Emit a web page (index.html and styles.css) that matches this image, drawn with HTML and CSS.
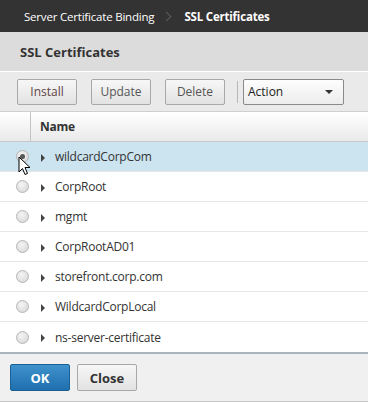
FILE: index.html
```html
<!DOCTYPE html>
<html lang="en">
<head>
  <meta charset="UTF-8">
  <title>SSL Certificates</title>
  <link rel="stylesheet" href="styles.css">
</head>
<body>
<div class="dialog">
  <!-- breadcrumb -->
  <div class="crumbs">
    <span class="crumb">Server Certificate Binding</span>
    <span class="crumb-sep"></span>
    <span class="crumb current">SSL Certificates</span>
  </div>

  <div class="heading">SSL Certificates</div>

  <div class="toolbar">
    <button class="btn install">Install</button>
    <button class="btn">Update</button>
    <button class="btn">Delete</button>
    <span class="tool-sep"></span>
    <div class="select">
      <span>Action</span>
      <span class="caret"></span>
    </div>
  </div>

  <div class="grid">
    <div class="grid-head">
      <div class="col-check"></div>
      <div class="col-name">Name</div>
    </div>
    <div class="row selected">
      <div class="col-check"><span class="radio checked"></span></div>
      <div class="col-name"><span class="expand"></span>wildcardCorpCom</div>
      <svg class="cursor" width="13" height="20" viewBox="0 0 13 20">
        <path d="M1 1 L1 16 L4.5 12.5 L7 18.5 L9.5 17.5 L7 11.5 L12 11.5 Z" fill="#fff" stroke="#000" stroke-width="1" stroke-linejoin="round"/>
      </svg>
    </div>
    <div class="row">
      <div class="col-check"><span class="radio"></span></div>
      <div class="col-name"><span class="expand"></span>CorpRoot</div>
    </div>
    <div class="row">
      <div class="col-check"><span class="radio"></span></div>
      <div class="col-name"><span class="expand"></span>mgmt</div>
    </div>
    <div class="row">
      <div class="col-check"><span class="radio"></span></div>
      <div class="col-name"><span class="expand"></span>CorpRootAD01</div>
    </div>
    <div class="row">
      <div class="col-check"><span class="radio"></span></div>
      <div class="col-name"><span class="expand"></span>storefront.corp.com</div>
    </div>
    <div class="row">
      <div class="col-check"><span class="radio"></span></div>
      <div class="col-name"><span class="expand"></span>WildcardCorpLocal</div>
    </div>
    <div class="row last">
      <div class="col-check"><span class="radio"></span></div>
      <div class="col-name"><span class="expand"></span>ns-server-certificate</div>
    </div>
  </div>

  <div class="footer">
    <button class="btn primary">OK</button>
    <button class="btn close">Close</button>
  </div>
</div>
</body>
</html>
```

FILE: styles.css
```css
* {
  box-sizing: border-box;
}
body {
  margin: 0;
  width: 368px;
  height: 402px;
  overflow: hidden;
  background: #fff;
  font-family: "Open Sans", "Noto Sans", sans-serif;
  font-size: 12px;
  color: #333;
}
.dialog {
  display: flex;
  flex-direction: column;
  height: 402px;
}

/* breadcrumb bar */
.crumbs {
  height: 32px;
  background: #333333;
  display: flex;
  align-items: center;
  padding-left: 24px;
  color: #fff;
  font-size: 11.5px;
  letter-spacing: -0.2px;
}
.crumb-sep {
  width: 7px;
  height: 7px;
  border-top: 1px solid #5e5e5e;
  border-right: 1px solid #5e5e5e;
  transform: rotate(45deg);
  margin: 0 14px 0 9px;
}
.current {
  font-weight: bold;
}

.heading {
  height: 40px;
  background: #dcdcdc;
  padding-left: 20px;
  display: flex;
  align-items: center;
  font-weight: bold;
  font-size: 13px;
  color: #333;
  border-bottom: 1px solid #fff;
}

/* toolbar */
.toolbar {
  height: 40px;
  background: #eaeaea;
  display: flex;
  align-items: center;
  padding-left: 17px;
  border-bottom: 1px solid #cfcfcf;
}
.btn {
  height: 26px;
  width: 60px;
  border: 1px solid #a8a8a8;
  border-radius: 2px;
  background: linear-gradient(#f7f7f7, #e2e2e2);
  font-family: inherit;
  font-size: 12px;
  color: #555;
  padding: 0;
  margin-right: 14px;
}
.btn.install {
  color: #5e4444;
}
.tool-sep {
  width: 1px;
  height: 22px;
  background: #b8b8b8;
  margin: 0 5px 0 -2px;
}
.select {
  width: 101px;
  height: 26px;
  border: 1px solid #8a8a8a;
  border-radius: 2px;
  background: linear-gradient(#fdfdfd, #ececec);
  display: flex;
  align-items: center;
  justify-content: space-between;
  padding: 0 10px 0 4px;
  color: #222;
}
.caret {
  width: 0;
  height: 0;
  border-left: 4px solid transparent;
  border-right: 4px solid transparent;
  border-top: 4px solid #333;
}

/* grid */
.grid {
  flex: 1;
  display: flex;
  flex-direction: column;
}
.grid-head {
  height: 30px;
  display: flex;
  background: linear-gradient(#ffffff, #e9e9e9);
  border-bottom: 1px solid #c8c8c8;
}
.grid-head .col-check {
  border-right: 1px solid #c4c4c4;
}
.grid-head .col-name {
  font-weight: bold;
  padding-left: 9px;
  color: #333;
}
.col-check {
  width: 31px;
  display: flex;
  align-items: center;
  padding-left: 16px;
}
.col-name {
  flex: 1;
  display: flex;
  align-items: center;
  color: #333;
  font-size: 12px;
  letter-spacing: -0.25px;
}
.row {
  height: 30px;
  display: flex;
  border-bottom: 1px solid #e6e6e6;
  position: relative;
}
.row.last {
  border-bottom: none;
}
.row.selected {
  background: #cce3f0;
}
.radio {
  flex: none;
  width: 13px;
  height: 13px;
  border-radius: 50%;
  border: 1px solid #b5b5b5;
  background: radial-gradient(circle at 40% 35%, #f4f4f4, #d4d4d4);
  display: flex;
  align-items: center;
  justify-content: center;
}
.radio.checked::after {
  content: "";
  width: 5px;
  height: 5px;
  border-radius: 50%;
  background: #555;
}
.expand {
  width: 0;
  height: 0;
  border-top: 4px solid transparent;
  border-bottom: 4px solid transparent;
  border-left: 4px solid #444;
  margin: 2px 10px 0 10px;
}
.cursor {
  position: absolute;
  left: 18px;
  top: 14px;
}

/* footer */
.footer {
  height: 50px;
  background: #f0f0f0;
  border-top: 2px solid #a9b4bf;
  border-bottom: 1px solid #c4c4c4;
  display: flex;
  align-items: center;
  padding-left: 10px;
}
.footer .btn {
  margin-right: 7px;
  height: 27px;
  font-size: 13px;
}
.btn.primary {
  background: linear-gradient(#3f92cc, #1f6fae);
  border-color: #1b5f95;
  color: #fff;
  font-weight: bold;
}
.btn.close {
  font-weight: bold;
  color: #333;
}
```
